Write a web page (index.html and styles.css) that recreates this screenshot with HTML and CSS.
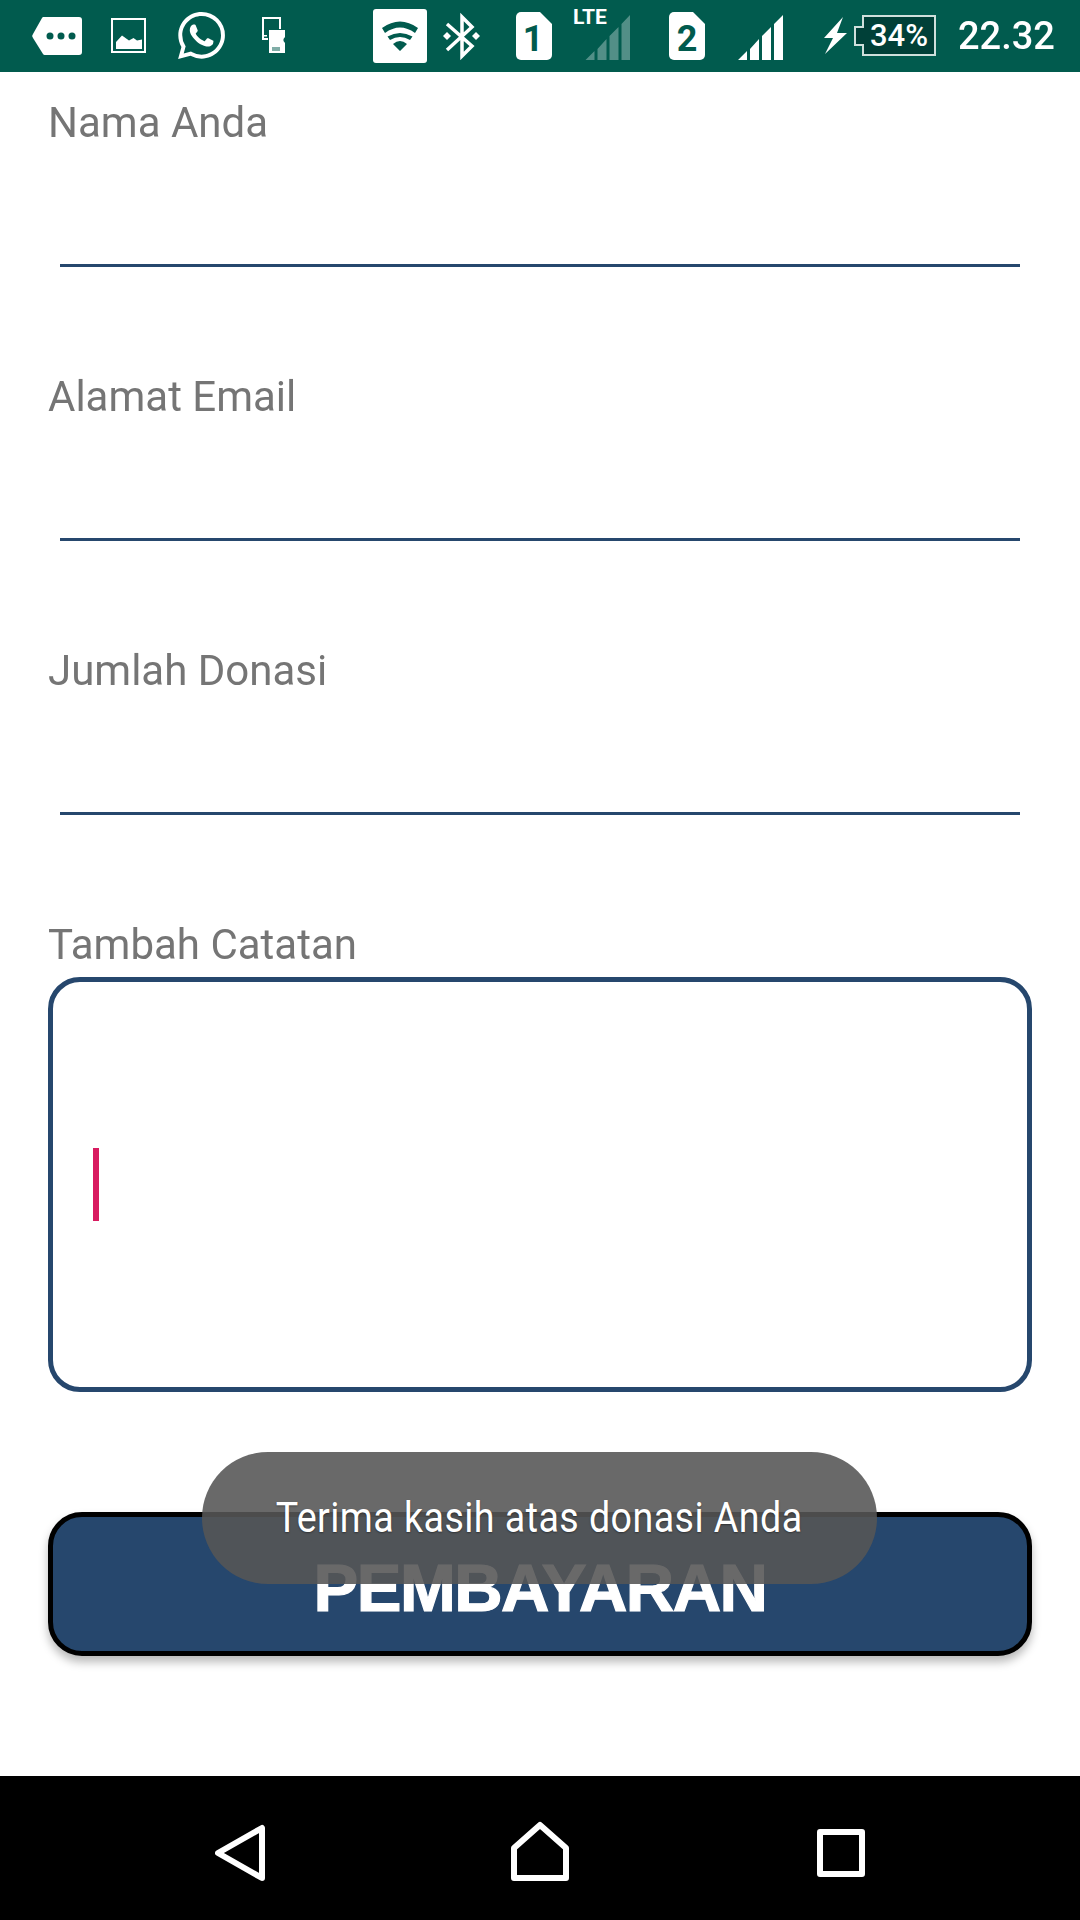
FILE: index.html
```html
<!DOCTYPE html>
<html lang="id">
<head>
<meta charset="utf-8">
<title>Donasi</title>
<link rel="stylesheet" href="styles.css">
</head>
<body>
<div class="screen">
  <header class="status">
    <svg class="ic tag" viewBox="0 0 50 72"><path class="w" d="M11 17H47a3 3 0 0 1 3 3V52a3 3 0 0 1-3 3H13a2 2 0 0 1-2-1L1 38a3 3 0 0 1 0-4L10 18a2 2 0 0 1 1-1Z"/><circle class="d" cx="18" cy="36" r="3.500"/><circle class="d" cx="29" cy="36" r="3.500"/><circle class="d" cx="40" cy="36" r="3.500"/></svg>
    <svg class="ic pic" viewBox="0 0 35 72"><rect class="ln2" x="1" y="19" width="33" height="33"/><path class="w" d="M5 49V42L11 35.500L18 40.500L22.500 38L26 40.500L31 39.500V49Z"/></svg>
    <svg class="ic wa" viewBox="0 0 47 72"><g transform="translate(0 12) scale(1.96)"><path class="w" d="M17.472 14.382c-.297-.149-1.758-.867-2.03-.967-.273-.099-.471-.148-.67.15-.197.297-.767.966-.94 1.164-.173.199-.347.223-.644.075-.297-.15-1.255-.463-2.39-1.475-.883-.788-1.48-1.761-1.653-2.059-.173-.297-.018-.458.13-.606.134-.133.298-.347.446-.52.149-.174.198-.298.298-.497.099-.198.05-.371-.025-.52-.075-.149-.669-1.612-.916-2.207-.242-.579-.487-.5-.669-.51-.173-.008-.371-.01-.57-.01-.198 0-.52.074-.792.372-.272.297-1.04 1.016-1.04 2.479 0 1.462 1.065 2.875 1.213 3.074.149.198 2.096 3.2 5.077 4.487.709.306 1.262.489 1.694.625.712.227 1.36.195 1.871.118.571-.085 1.758-.719 2.006-1.413.248-.694.248-1.289.173-1.413-.074-.124-.272-.198-.57-.347m-5.421 7.403h-.004a9.87 9.87 0 01-5.031-1.378l-.361-.214-3.741.982.998-3.648-.235-.374a9.86 9.86 0 01-1.51-5.26c.001-5.45 4.436-9.884 9.888-9.884 2.64 0 5.122 1.03 6.988 2.898a9.825 9.825 0 012.893 6.994c-.003 5.45-4.437 9.884-9.885 9.884m8.413-18.297A11.815 11.815 0 0012.05 0C5.495 0 .16 5.335.157 11.892c0 2.096.547 4.142 1.588 5.945L.057 24l6.305-1.654a11.882 11.882 0 005.683 1.448h.005c6.554 0 11.89-5.335 11.893-11.893a11.821 11.821 0 00-3.48-8.413Z"/></g></svg>
    <svg class="ic sd" viewBox="0 0 23 72"><path class="ln2" d="M6 39H1V18H18V29"/><path class="w" d="M7 30H23V37L21.500 39V41L23 43V53H7Z"/><path class="d" d="M10.500 47h1v4h-1zM12.500 47h1v4h-1zM14.500 47h1v4h-1zM16.500 47h1v4h-1z"/><rect class="w" x="2" y="35" width="3" height="1.500"/></svg>
    <svg class="ic wifi" viewBox="0 0 54 72"><rect class="w" x="0" y="9" width="54" height="54" rx="3"/><path class="d" d="M9 28Q27 15 45 28L42 33Q27 22 12 33ZM14.500 36.500Q27 29.500 39.500 36.500L37 40Q27 34 17 40ZM20 44Q27 38 34 44L27 51Z"/></svg>
    <svg class="ic bt" viewBox="0 0 38 72"><path class="ln3" d="M5 24L30 46L20 56V17L30 27L5 50"/><path class="w" d="M5 32L9 36L5 40L1 36ZM34 32L38 36L34 40L30 36Z"/></svg>
    <svg class="ic sim1" viewBox="0 0 36 72"><path class="w" d="M5 12H24L36 24V55a5 5 0 0 1-5 5H5a5 5 0 0 1-5-5V17a5 5 0 0 1 5-5Z"/><text class="simt" x="17" y="51">1</text></svg>
    <svg class="ic lte" viewBox="0 0 57 72"><text class="ltet" x="0" y="24">LTE</text><path class="wf" d="M12.500 60L21.500 51V60ZM24.500 49L33.500 39V60H24.500ZM36.500 36L45.500 27V60H36.500ZM48.500 24L57 15V60H48.500Z"/></svg>
    <svg class="ic sim2" viewBox="0 0 36 72"><path class="w" d="M5 12H24L36 24V55a5 5 0 0 1-5 5H5a5 5 0 0 1-5-5V17a5 5 0 0 1 5-5Z"/><text class="simt" x="18" y="51">2</text></svg>
    <svg class="ic sig" viewBox="0 0 45 72"><path class="w" d="M0 60L9 51V60ZM12 49L21 39V60H12ZM24 36L33 27V60H24ZM36 24L45 15V60H36Z"/></svg>
    <svg class="ic bolt" viewBox="0 0 23 72"><path class="w" d="M19 17L0 38H9L1 54L23 33H13Z"/></svg>
    <svg class="ic batt" viewBox="0 0 82 72"><path class="bb" d="M9 16H81V55H9V45H1V27H9Z"/><text class="batt-t" x="45" y="46">34%</text></svg>
    <span class="time">22.32</span>
  </header>

  <main class="form">
    <div class="field">
      <label class="label">Nama Anda</label>
      <div class="line"></div>
    </div>
    <div class="field">
      <label class="label">Alamat Email</label>
      <div class="line"></div>
    </div>
    <div class="field">
      <label class="label">Jumlah Donasi</label>
      <div class="line"></div>
    </div>
    <label class="label">Tambah Catatan</label>
    <div class="notes"><span class="caret"></span></div>
    <button class="pay">PEMBAYARAN</button>
  </main>

  <nav class="nav">
    <svg class="nv back" viewBox="0 0 50 144"><path d="M3 77L47 52V102Z"/></svg>
    <svg class="nv home" viewBox="0 0 58 144"><path d="M3 102V72L29 49L55 72V102Z"/></svg>
    <svg class="nv rec" viewBox="0 0 48 144"><rect x="3" y="56" width="42" height="42"/></svg>
  </nav>

  <div class="toast"><span class="toast-t">Terima kasih atas donasi Anda</span></div>
</div>
</body>
</html>
```

FILE: styles.css
```css
* { box-sizing: border-box; }
html, body { margin: 0; padding: 0; }
body { background: #fff; font-family: Roboto, sans-serif; }
.screen { position: relative; width: 1080px; height: 1920px; display: flex; flex-direction: column; overflow: hidden; background: #fff; }

.status { height: 72px; flex: none; display: flex; align-items: center; padding-left: 32px; background: #015b4e; }
.ic { height: 72px; flex: none; display: block; overflow: visible; }
.w { fill: #fff; }
.d { fill: #015b4e; }
.wf { fill: #fff; fill-opacity: .32; }
.ln2 { fill: none; stroke: #fff; stroke-width: 2; }
.ln3 { fill: none; stroke: #fff; stroke-width: 3.500; }
.tag { width: 50px; }
.pic { width: 35px; margin-left: 29px; }
.wa { width: 47px; margin-left: 32px; }
.sd { width: 23px; margin-left: 37px; }
.wifi { width: 54px; margin-left: 88px; }
.bt { width: 38px; margin-left: 15px; }
.sim1 { width: 36px; margin-left: 36px; }
.lte { width: 57px; margin-left: 21px; }
.sim2 { width: 36px; margin-left: 39px; }
.sig { width: 45px; margin-left: 33px; }
.bolt { width: 23px; margin-left: 41px; }
.batt { width: 82px; margin-left: 7px; }
.simt { font: 700 36px Roboto, sans-serif; fill: #015b4e; text-anchor: middle; }
.ltet { font: 700 21px Roboto, sans-serif; fill: #fff; }
.bb { fill: #004038; stroke: #cfe0dc; stroke-width: 2; }
.batt-t { font: 500 31px Roboto, sans-serif; fill: #fff; text-anchor: middle; }
.time { margin-left: 22px; font: 500 38px/72px Roboto, sans-serif; color: #fff; will-change: transform; }

.form { flex: 1; display: flex; flex-direction: column; padding: 26px 48px 0; }
.field { height: 274px; flex: none; }
.label { display: block; font: 400 42px/50px Roboto, sans-serif; color: #757575; will-change: transform; }
.line { height: 3px; margin: 116px 12px 0; background: #26476d; }
.notes { height: 415px; margin-top: 7px; flex: none; display: flex; align-items: center; padding-left: 40px; border: 5.500px solid #26476d; border-radius: 32px; }
.caret { width: 6px; height: 73px; background: #d81b60; }
.pay { height: 144px; margin-top: 120px; flex: none; padding: 6px 0 0; border: 5px solid #000; border-radius: 34px; background: #26476d; color: #fff; font: 700 67px "Liberation Sans", Arial, sans-serif; letter-spacing: -1.500px; -webkit-text-stroke: 1.200px #fff; box-shadow: 0 6px 10px rgba(0, 0, 0, .28); }

.nav { height: 144px; flex: none; display: flex; align-items: center; padding-left: 215px; background: #000; }
.nv { height: 144px; flex: none; display: block; }
.nv path, .nv rect { fill: none; stroke: #fff; stroke-width: 6; stroke-linejoin: round; }
.back { width: 50px; }
.home { width: 58px; margin-left: 246px; }
.rec { width: 48px; margin-left: 248px; }

.toast { position: absolute; left: 202px; top: 1452px; width: 675px; height: 132px; padding-bottom: 3px; display: flex; align-items: center; justify-content: center; border-radius: 66px; background: rgba(86, 86, 86, .885); }
.toast-t { display: block; white-space: nowrap; font: 400 43px/50px Roboto, sans-serif; letter-spacing: .5px; color: #fff; transform: scaleX(.875); text-shadow: 0 1px 2px rgba(0, 0, 0, .4); }
```
